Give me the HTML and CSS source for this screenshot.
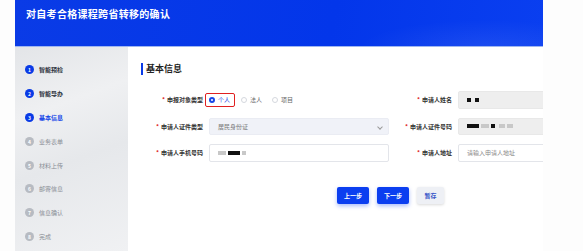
FILE: index.html
```html
<!DOCTYPE html>
<html lang="zh-CN">
<head>
	<meta charset="utf-8">
	<title>对自考合格课程跨省转移的确认</title>
	<link rel="stylesheet" href="styles.css">
</head>
<body>
<div class="page">
	<header class="banner">
		<h1>对自考合格课程跨省转移的确认</h1>
	</header>
	<div class="body-wrap">
		<ul class="steps">
			<li class="done"><span class="num">1</span>智能预检</li>
			<li class="done"><span class="num">2</span>智能导办</li>
			<li class="active"><span class="num">3</span>基本信息</li>
			<li><span class="num">4</span>业务表单</li>
			<li><span class="num">5</span>材料上传</li>
			<li><span class="num">6</span>邮寄信息</li>
			<li><span class="num">7</span>信息确认</li>
			<li><span class="num">8</span>完成</li>
		</ul>
		<main class="main">
			<h2 class="section-title">基本信息</h2>
			<div class="form">
				<label class="label"><i>*</i>申报对象类型</label>
				<div class="radios">
					<span class="radio checked"><b></b>个人</span>
					<span class="radio"><b></b>法人</span>
					<span class="radio"><b></b>项目</span>
				</div>
				<label class="label"><i>*</i>申请人姓名</label>
				<div class="field readonly"><span class="mask sq"></span><span class="mask sq"></span></div>

				<label class="label"><i>*</i>申请人证件类型</label>
				<div class="field select">居民身份证<span class="chev"></span></div>
				<label class="label"><i>*</i>申请人证件号码</label>
				<div class="field readonly"><span class="mask w12"></span><span class="mask grey w8"></span><span class="mask sq"></span><span class="mask grey w6"></span><span class="mask grey w6"></span></div>

				<label class="label"><i>*</i>申请人手机号码</label>
				<div class="field"><span class="mask grey w8"></span><span class="mask w12"></span><span class="mask grey w4"></span></div>
				<label class="label"><i>*</i>申请人地址</label>
				<div class="field placeholder">请输入申请人地址</div>
			</div>
			<div class="actions">
				<button class="btn primary">上一步</button>
				<button class="btn primary">下一步</button>
				<button class="btn plain">暂存</button>
			</div>
		</main>
	</div>
</div>
</body>
</html>
```

FILE: styles.css
```css
	body {
		margin: 0;
		background-color: #FDFDFD;
		font-family: "Noto Sans CJK SC", "Noto Sans", sans-serif;
	}
	.page {
		margin-left: 15px;
		width: 528px;
	}
	.banner {
		height: 47px;
		box-sizing: border-box;
		background: radial-gradient(ellipse 180px 40px at 470px 48px, rgba(255,255,255,0.08), rgba(255,255,255,0) 70%),
			linear-gradient(100deg, #0a3be6 0%, #0336ea 60%, #0a3ff0 100%);
		border-bottom: 1px solid #9fb6f0;
		padding: 6px 0 0 11px;
	}
	.banner h1 {
		margin: 0;
		color: #fff;
		font-size: 10px;
		font-weight: bold;
		line-height: 16px;
		letter-spacing: 0.3px;
	}
	.body-wrap {
		display: flex;
		height: 204px;
	}
	.steps {
		list-style: none;
		margin: 0;
		padding: 11px 0 0 10px;
		width: 113px;
		box-sizing: border-box;
		background: linear-gradient(160deg, #e3e5e8 0%, #eff0f2 30%, #e6e8eb 55%, #f0f1f3 100%);
	}
	.steps li {
		display: flex;
		align-items: center;
		height: 23.8px;
		font-size: 6px;
		color: #8a8e96;
	}
	.steps .num {
		width: 9px;
		height: 9px;
		border-radius: 50%;
		background-color: #b7bbc2;
		color: #fff;
		font-size: 5px;
		font-weight: bold;
		display: flex;
		align-items: center;
		justify-content: center;
		margin-right: 5px;
	}
	.steps .done, .steps .active {
		color: #2f3440;
		font-weight: bold;
	}
	.steps .done .num, .steps .active .num {
		background-color: #0a3be6;
	}
	.steps .active {
		color: #1747e8;
	}
	.main {
		flex: 1;
		background-color: #fff;
		overflow: hidden;
		padding: 16px 0 0 0;
	}
	.section-title {
		margin: 0 0 0 13px;
		font-size: 9px;
		line-height: 12px;
		font-weight: bold;
		color: #222;
		border-left: 2px solid #0a3be6;
		padding-left: 3px;
	}
	.form {
		display: grid;
		grid-template-columns: 81px 180px 69px 180px;
		grid-auto-rows: 17.5px;
		row-gap: 9px;
		margin-top: 16px;
		align-items: center;
	}
	.label {
		text-align: right;
		padding-right: 6px;
		font-size: 6px;
		font-weight: bold;
		color: #333;
		white-space: nowrap;
	}
	.label i {
		color: #e02020;
		font-style: normal;
		margin-right: 2px;
	}
	.radios {
		display: flex;
		align-items: center;
		font-size: 6px;
		color: #666;
	}
	.radio {
		display: flex;
		align-items: center;
		height: 12px;
		padding: 0 4px 0 3px;
		margin-right: 3px;
	}
	.radio b {
		width: 6px;
		height: 6px;
		border-radius: 50%;
		border: 1px solid #d5d8de;
		margin-right: 3px;
		box-sizing: border-box;
	}
	.radio.checked {
		border: 1px solid #e02020;
		border-radius: 2px;
		color: #1747e8;
		margin-left: -4px;
	}
	.radio.checked b {
		border: 2px solid #1747e8;
	}
	.field {
		height: 17.5px;
		box-sizing: border-box;
		border: 1px solid #e3e5ea;
		border-radius: 2px;
		display: flex;
		align-items: center;
		padding-left: 8px;
		font-size: 6px;
		color: #555;
		background-color: #fff;
	}
	.field.readonly {
		background-color: #eeeeee;
		border-color: #e8e8e8;
	}
	.field.select {
		background-color: #f0f2f8;
		border-color: #eaecf3;
		color: #777;
		position: relative;
	}
	.chev {
		position: absolute;
		right: 6px;
		top: 6px;
		width: 3px;
		height: 3px;
		border-right: 1px solid #999;
		border-bottom: 1px solid #999;
		transform: rotate(45deg);
	}
	.field.placeholder {
		color: #888;
	}
	.mask {
		display: inline-block;
		height: 4px;
		background-color: #111;
		margin-right: 2px;
	}
	.mask.sq { width: 4px; margin-right: 4px; }
	.mask.grey { background-color: #c8c8c8; }
	.mask.w4 { width: 4px; }
	.mask.w6 { width: 6px; }
	.mask.w8 { width: 8px; }
	.mask.w12 { width: 12px; }
	.actions {
		display: flex;
		gap: 8px;
		margin: 25px 0 0 209px;
	}
	.btn {
		height: 17px;
		padding: 0;
		border: none;
		border-radius: 2px;
		font-family: inherit;
		font-size: 6px;
		font-weight: bold;
	}
	.btn.primary {
		width: 32px;
		background-color: #0b3ef0;
		color: #fff;
		box-shadow: 0 2px 4px rgba(11,62,240,0.35);
	}
	.btn.plain {
		width: 27px;
		background-color: #eef0f5;
		color: #3a57c8;
		box-shadow: 0 1px 3px rgba(0,0,0,0.15);
	}
```
